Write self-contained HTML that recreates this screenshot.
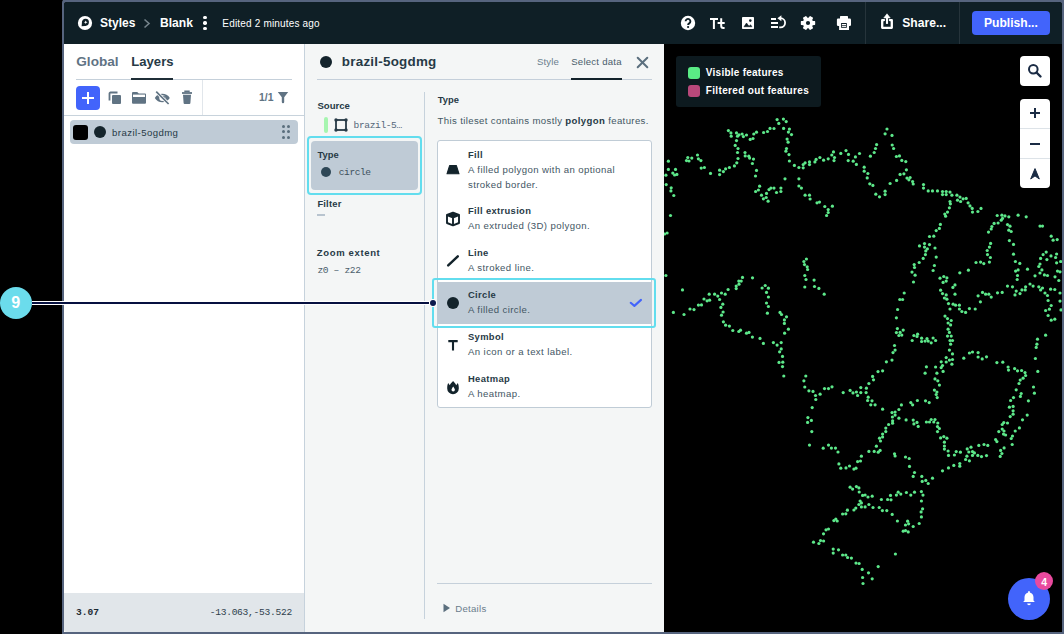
<!DOCTYPE html>
<html><head><meta charset="utf-8">
<style>
*{margin:0;padding:0;box-sizing:border-box}
html,body{width:1064px;height:634px;overflow:hidden;background:#000;position:relative}
.a{position:absolute}
.t{position:absolute;white-space:nowrap}
svg{overflow:visible}
</style></head>
<body>
<div class="a" style="left:62px;top:-1px;width:1004px;height:638px;background:#56647e;border-radius:4px"></div>
<div class="a" style="left:64px;top:2px;width:998px;height:630px;background:#000;border-radius:3px"></div>
<div class="a" style="left:64px;top:2px;width:998px;height:42px;background:#0f1f26;border-radius:3px 3px 0 0"></div>
<svg class="a" style="left:77px;top:15.1px" width="16" height="16" viewBox="0 0 16 16"><circle cx="8" cy="8" r="7.1" fill="#fff"/><path d="M8.6 3.7a3.6 3.6 0 1 1 -0.6 7.2 L4.6 11.2 4.9 7.9A3.6 3.6 0 0 1 8.6 3.7z" fill="#0f1f26"/><path d="M8.7 5.6l0.6 1.2 1.3 0.5-1.3 0.5-0.6 1.2-0.6-1.2-1.3-0.5 1.3-0.5z" fill="#fff"/></svg>
<div class="t" style="left:100.00px;top:17.00px;font:bold 12px/1 'Liberation Sans',sans-serif;color:#fff;letter-spacing:0px;">Styles</div>
<svg class="a" style="left:143px;top:18px" width="8" height="11" viewBox="0 0 8 11"><path d="M1.5 1.5 L6 5.5 L1.5 9.5" stroke="#75838b" stroke-width="1.6" fill="none"/></svg>
<div class="t" style="left:160.00px;top:17.00px;font:bold 12.1px/1 'Liberation Sans',sans-serif;color:#fff;letter-spacing:0px;">Blank</div>
<div class="a" style="left:203.3px;top:15.8px;width:3.4px;height:3.4px;background:#fff;border-radius:50%"></div>
<div class="a" style="left:203.3px;top:21.3px;width:3.4px;height:3.4px;background:#fff;border-radius:50%"></div>
<div class="a" style="left:203.3px;top:26.8px;width:3.4px;height:3.4px;background:#fff;border-radius:50%"></div>
<div class="t" style="left:222.30px;top:19.00px;font:normal 10px/1 'Liberation Sans',sans-serif;color:#fff;letter-spacing:0.18px;">Edited 2 minutes ago</div>
<svg class="a" style="left:680px;top:15px" width="16" height="16" viewBox="0 0 16 16"><circle cx="8" cy="8" r="7.2" fill="#fff"/><path d="M5.6 6.3a2.4 2.4 0 1 1 3.6 2.1c-0.8 0.5-1.1 0.8-1.1 1.6" stroke="#0f1f26" stroke-width="1.9" fill="none"/><circle cx="8.1" cy="12" r="1.1" fill="#0f1f26"/></svg>
<svg class="a" style="left:709px;top:16px" width="17" height="14" viewBox="0 0 17 14"><path d="M1 2.9h8M4.9 2V12.9" stroke="#fff" stroke-width="2"/><path d="M8.6 7.1h7.1M12.2 2.2v7.6c0 1.7 0.9 2.2 2.1 2.2h1.3" stroke="#fff" stroke-width="2" fill="none"/></svg>
<svg class="a" style="left:741px;top:16px" width="14" height="14" viewBox="0 0 14 14"><rect x="1" y="1" width="12" height="12" rx="0.8" fill="#fff"/><path d="M3 10.7 L5.5 7 L7.4 9.6 L8.3 9.9 L9.6 8.8 L10.9 10.7z" fill="#0f1f26" stroke="#0f1f26" stroke-width="0.6" stroke-linejoin="round"/><circle cx="9.3" cy="4.6" r="1.3" fill="#0f1f26"/></svg>
<svg class="a" style="left:770px;top:15px" width="17" height="15" viewBox="0 0 17 15"><path d="M1 4h5M1 8h7M1 12h7" stroke="#fff" stroke-width="1.8"/><path d="M10.5 3.2a4.6 4.6 0 0 1 0 9.2H9.2" stroke="#fff" stroke-width="1.8" fill="none"/><path d="M7.4 3.3 L11.4 0.3 L11.4 6.3z" fill="#fff"/></svg>
<svg class="a" style="left:800px;top:14.8px" width="16" height="16" viewBox="0 0 16 16"><path d="M12.32 6.43 L14.58 6.72 L14.58 9.28 L12.32 9.57 L11.52 10.96 L12.40 13.06 L10.18 14.33 L8.80 12.53 L7.20 12.53 L5.82 14.33 L3.60 13.06 L4.48 10.96 L3.68 9.57 L1.42 9.28 L1.42 6.72 L3.68 6.43 L4.48 5.04 L3.60 2.94 L5.82 1.67 L7.20 3.47 L8.80 3.47 L10.18 1.67 L12.40 2.94 L11.52 5.04z" fill="#fff" stroke="#fff" stroke-width="1.2" stroke-linejoin="round"/><circle cx="8" cy="8" r="4.9" fill="#fff"/><circle cx="8" cy="8" r="2.1" fill="#0f1f26"/></svg>
<svg class="a" style="left:836px;top:15px" width="16" height="16" viewBox="0 0 16 16"><rect x="4" y="1" width="8" height="4" rx="0.6" fill="#fff"/><rect x="0.9" y="3.6" width="14.1" height="7.4" rx="1.2" fill="#fff"/><rect x="3.1" y="9" width="9.9" height="6" fill="#fff"/><rect x="5.1" y="8" width="5.7" height="4.8" fill="#0f1f26"/><rect x="5.9" y="9" width="4.1" height="1.1" fill="#fff"/><rect x="5.9" y="10.8" width="4.1" height="1.1" fill="#fff"/></svg>
<div class="a" style="left:865px;top:2px;width:1px;height:42px;background:#26343b;"></div>
<svg class="a" style="left:880px;top:13px" width="14" height="17" viewBox="0 0 14 17"><path d="M4 7.1H2.2V14.8H11.8V7.1H9.9" stroke="#fff" stroke-width="2.3" fill="none" stroke-linejoin="round" stroke-linecap="round"/><path d="M7 10.9V4" stroke="#fff" stroke-width="2.1"/><path d="M3.8 4.9 L7 0.8 L10.2 4.9z" fill="#fff" stroke="#fff" stroke-width="0.6" stroke-linejoin="round"/></svg>
<div class="t" style="left:902.30px;top:17.00px;font:bold 12.1px/1 'Liberation Sans',sans-serif;color:#fff;letter-spacing:0px;">Share...</div>
<div class="a" style="left:959px;top:2px;width:1px;height:42px;background:#26343b;"></div>
<div class="a" style="left:972px;top:11px;width:78px;height:24px;background:#4264fb;border-radius:4px"></div>
<div class="t" style="left:984.00px;top:17.00px;font:bold 12.1px/1 'Liberation Sans',sans-serif;color:#fff;letter-spacing:0px;">Publish...</div>
<div class="a" style="left:64px;top:44px;width:240px;height:588px;background:#fff;"></div>
<div class="t" style="left:76.30px;top:55.00px;font:bold 13.6px/1 'Liberation Sans',sans-serif;color:#5f7384;letter-spacing:0px;">Global</div>
<div class="t" style="left:131.30px;top:55.00px;font:bold 13.1px/1 'Liberation Sans',sans-serif;color:#273a46;letter-spacing:0px;">Layers</div>
<div class="a" style="left:76px;top:79px;width:216px;height:1px;background:#c5d0da;"></div>
<div class="a" style="left:131px;top:78px;width:42px;height:2px;background:#1f2e37;"></div>
<div class="a" style="left:76px;top:86px;width:24px;height:24px;background:#4264fb;border-radius:4px"></div>
<div class="a" style="left:82px;top:97px;width:12px;height:2px;background:#fff;"></div>
<div class="a" style="left:87px;top:92px;width:2px;height:12px;background:#fff;"></div>
<svg class="a" style="left:108px;top:91px" width="14" height="14" viewBox="0 0 14 14"><path d="M1.5 9.5V2.5a1 1 0 0 1 1-1H9.5" stroke="#607383" stroke-width="1.8" fill="none"/><rect x="4" y="4" width="9" height="9" rx="1" fill="#607383"/></svg>
<svg class="a" style="left:131px;top:91px" width="16" height="14" viewBox="0 0 16 14"><path d="M1 2a1 1 0 0 1 1-1h4.2l1.6 1.6H14a1 1 0 0 1 1 1V11.7a1 1 0 0 1-1 1H2a1 1 0 0 1-1-1z" fill="#607383"/><rect x="2" y="3.6" width="12" height="2.4" fill="#fff"/></svg>
<svg class="a" style="left:154px;top:90px" width="18" height="16" viewBox="0 0 18 16"><path d="M0.8 8 C3.8 2.4 12.6 2.4 15.8 8 C12.6 13.6 3.8 13.6 0.8 8z" fill="#607383"/><circle cx="8.3" cy="8" r="3" fill="#fff"/><circle cx="9.2" cy="7.6" r="2" fill="#607383"/><path d="M2.2 1.6 L14.6 14" stroke="#fff" stroke-width="3.2"/><path d="M2.2 1.6 L14.6 14" stroke="#607383" stroke-width="1.7"/></svg>
<svg class="a" style="left:181px;top:90px" width="12" height="15" viewBox="0 0 12 15"><path d="M1 3h10" stroke="#607383" stroke-width="1.8"/><path d="M4 2.2V1.2h4v1" stroke="#607383" stroke-width="1.4" fill="none"/><path d="M2 4.8h8l-0.6 8.2a1 1 0 0 1-1 0.9H3.6a1 1 0 0 1-1-0.9z" fill="#607383"/></svg>
<div class="a" style="left:202px;top:80px;width:1px;height:35px;background:#e1e6eb;"></div>
<div class="t" style="left:259.00px;top:93.00px;font:bold 10.4px/1 'Liberation Sans',sans-serif;color:#607383;letter-spacing:0px;">1/1</div>
<svg class="a" style="left:277px;top:91.3px" width="12" height="12" viewBox="0 0 12 12"><path d="M0.8 1h10.4L7.2 6.2v4.8a1 1 0 0 1-2.4 0V6.2z" fill="#607383"/></svg>
<div class="a" style="left:64px;top:115px;width:240px;height:1px;background:#c8d3dc;"></div>
<div class="a" style="left:70px;top:120px;width:228px;height:24px;background:#bfcbd6;border-radius:4px"></div>
<div class="a" style="left:73px;top:125px;width:15px;height:15px;background:#000;border-radius:3px"></div>
<div class="a" style="left:94px;top:126px;width:12px;height:12px;background:#15252c;border-radius:50%"></div>
<div class="t" style="left:112.00px;top:128.00px;font:normal 9.6px/1 'Liberation Sans',sans-serif;color:#273a46;letter-spacing:0.43px;">brazil-5ogdmg</div>
<div class="a" style="left:282.0px;top:124.9px;width:3px;height:3px;background:#5a6e7d;border-radius:50%"></div>
<div class="a" style="left:282.0px;top:130.4px;width:3px;height:3px;background:#5a6e7d;border-radius:50%"></div>
<div class="a" style="left:282.0px;top:135.9px;width:3px;height:3px;background:#5a6e7d;border-radius:50%"></div>
<div class="a" style="left:287.0px;top:124.9px;width:3px;height:3px;background:#5a6e7d;border-radius:50%"></div>
<div class="a" style="left:287.0px;top:130.4px;width:3px;height:3px;background:#5a6e7d;border-radius:50%"></div>
<div class="a" style="left:287.0px;top:135.9px;width:3px;height:3px;background:#5a6e7d;border-radius:50%"></div>
<div class="a" style="left:64px;top:593px;width:240px;height:39px;background:#e1e6ea;border-radius:0 0 0 3px"></div>
<div class="t" style="left:76.00px;top:608.00px;font:bold 9.6px/1 'Liberation Mono',monospace;color:#1b2a33;letter-spacing:0px;">3.07</div>
<div class="t" style="left:209.70px;top:608.00px;font:normal 9.6px/1 'Liberation Mono',monospace;color:#2f414d;letter-spacing:-0.27px;">-13.063,-53.522</div>
<div class="a" style="left:304px;top:44px;width:360px;height:588px;background:#f4f6f6;"></div>
<div class="a" style="left:304px;top:44px;width:1px;height:588px;background:#c6d2dc;"></div>
<div class="a" style="left:320px;top:55.5px;width:12px;height:12px;background:#13232b;border-radius:50%"></div>
<div class="t" style="left:341.80px;top:55.00px;font:bold 13.4px/1 'Liberation Sans',sans-serif;color:#273a46;letter-spacing:0.25px;">brazil-5ogdmg</div>
<div class="t" style="left:537.00px;top:57.00px;font:normal 9.6px/1 'Liberation Sans',sans-serif;color:#6b7f8e;letter-spacing:0.15px;">Style</div>
<div class="t" style="left:571.20px;top:57.00px;font:normal 9.6px/1 'Liberation Sans',sans-serif;color:#4a5d6b;letter-spacing:0.23px;">Select data</div>
<div class="a" style="left:317px;top:79px;width:335px;height:1px;background:#c4cfda;"></div>
<div class="a" style="left:571px;top:78px;width:51px;height:2px;background:#13232b;"></div>
<svg class="a" style="left:636.4px;top:56px" width="13" height="13" viewBox="0 0 13 13"><path d="M1.7 1.7 L11.3 11.3 M11.3 1.7 L1.7 11.3" stroke="#5b6f7e" stroke-width="2" stroke-linecap="round"/></svg>
<div class="t" style="left:317.40px;top:101.00px;font:bold 9.6px/1 'Liberation Sans',sans-serif;color:#273a46;letter-spacing:0px;">Source</div>
<div class="a" style="left:324px;top:117px;width:3.5px;height:15.5px;background:#a6f5b0;border-radius:2px"></div>
<svg class="a" style="left:333px;top:117px" width="16" height="16" viewBox="0 0 16 16"><rect x="3" y="3" width="10" height="10" stroke="#273a46" stroke-width="1.8" fill="none"/><circle cx="3" cy="3" r="1.7" fill="#273a46"/><circle cx="13" cy="3" r="1.7" fill="#273a46"/><circle cx="3" cy="13" r="1.7" fill="#273a46"/><circle cx="13" cy="13" r="1.7" fill="#273a46"/></svg>
<div class="t" style="left:353.60px;top:121.00px;font:normal 9.6px/1 'Liberation Mono',monospace;color:#55687a;letter-spacing:-0.4px;">brazil-5…</div>
<div class="a" style="left:307px;top:136px;width:115px;height:59px;background:transparent;border:2px solid #62ddee;border-radius:4px"></div>
<div class="a" style="left:311px;top:141px;width:107px;height:49px;background:#bfcbd6;border-radius:4px"></div>
<div class="t" style="left:317.60px;top:150.00px;font:bold 9.4px/1 'Liberation Sans',sans-serif;color:#273a46;letter-spacing:0px;">Type</div>
<div class="a" style="left:321px;top:167px;width:10px;height:10px;background:#2e4756;border-radius:50%"></div>
<div class="t" style="left:338.80px;top:168.00px;font:normal 9.6px/1 'Liberation Mono',monospace;color:#3d505d;letter-spacing:-0.45px;">circle</div>
<div class="t" style="left:317.40px;top:199.00px;font:bold 9.4px/1 'Liberation Sans',sans-serif;color:#273a46;letter-spacing:0.2px;">Filter</div>
<div class="a" style="left:317px;top:214px;width:7.5px;height:2px;background:#b8c4cf;"></div>
<div class="t" style="left:316.80px;top:248.00px;font:bold 9.5px/1 'Liberation Sans',sans-serif;color:#273a46;letter-spacing:0.65px;">Zoom extent</div>
<div class="t" style="left:317.40px;top:266.00px;font:normal 9.6px/1 'Liberation Mono',monospace;color:#4c5f6d;letter-spacing:-0.35px;">z0 – z22</div>
<div class="a" style="left:424px;top:92px;width:1px;height:527px;background:#c6d2dc;"></div>
<div class="t" style="left:437.80px;top:95.00px;font:bold 9.4px/1 'Liberation Sans',sans-serif;color:#273a46;letter-spacing:0px;">Type</div>
<div class="t" style="left:437.60px;top:116.00px;font:normal 9.6px/1 'Liberation Sans',sans-serif;color:#435664;letter-spacing:0.36px;">This tileset contains mostly <b style="color:#273a46">polygon</b> features.</div>
<div class="a" style="left:437px;top:140px;width:215px;height:268px;background:#fff;border:1px solid #c0ccd6;border-radius:3px"></div>
<div class="t" style="left:468.00px;top:150.00px;font:bold 9.4px/1 'Liberation Sans',sans-serif;color:#273a46;letter-spacing:0.35px;">Fill</div>
<div class="t" style="left:468.00px;top:165.00px;font:normal 9.6px/1 'Liberation Sans',sans-serif;color:#435664;letter-spacing:0.4px;">A filled polygon with an optional</div>
<div class="t" style="left:468.00px;top:180.00px;font:normal 9.6px/1 'Liberation Sans',sans-serif;color:#435664;letter-spacing:0.4px;">stroked border.</div>
<div class="t" style="left:468.00px;top:206.00px;font:bold 9.4px/1 'Liberation Sans',sans-serif;color:#273a46;letter-spacing:0.35px;">Fill extrusion</div>
<div class="t" style="left:468.00px;top:221.00px;font:normal 9.6px/1 'Liberation Sans',sans-serif;color:#435664;letter-spacing:0.4px;">An extruded (3D) polygon.</div>
<div class="t" style="left:468.00px;top:248.00px;font:bold 9.4px/1 'Liberation Sans',sans-serif;color:#273a46;letter-spacing:0.35px;">Line</div>
<div class="t" style="left:468.00px;top:263.00px;font:normal 9.6px/1 'Liberation Sans',sans-serif;color:#435664;letter-spacing:0.4px;">A stroked line.</div>
<div class="a" style="left:438px;top:282px;width:213px;height:42px;background:#bfcbd6;"></div>
<div class="t" style="left:468.00px;top:290.00px;font:bold 9.4px/1 'Liberation Sans',sans-serif;color:#273a46;letter-spacing:0.35px;">Circle</div>
<div class="t" style="left:468.00px;top:305.00px;font:normal 9.6px/1 'Liberation Sans',sans-serif;color:#435664;letter-spacing:0.4px;">A filled circle.</div>
<div class="t" style="left:468.00px;top:332.00px;font:bold 9.4px/1 'Liberation Sans',sans-serif;color:#273a46;letter-spacing:0.35px;">Symbol</div>
<div class="t" style="left:468.00px;top:347.00px;font:normal 9.6px/1 'Liberation Sans',sans-serif;color:#435664;letter-spacing:0.4px;">An icon or a text label.</div>
<div class="t" style="left:468.00px;top:374.00px;font:bold 9.4px/1 'Liberation Sans',sans-serif;color:#273a46;letter-spacing:0.35px;">Heatmap</div>
<div class="t" style="left:468.00px;top:389.00px;font:normal 9.6px/1 'Liberation Sans',sans-serif;color:#435664;letter-spacing:0.4px;">A heatmap.</div>
<svg class="a" style="left:445px;top:163px" width="16" height="12" viewBox="0 0 16 12"><path d="M4.6 2.6h6.8l2.6 8.2H2z" fill="#13232b" stroke="#13232b" stroke-width="1.1" stroke-linejoin="round"/></svg>
<svg class="a" style="left:445px;top:211px" width="16" height="16" viewBox="0 0 16 16"><path d="M8 1.6 L14 4 V12 L8 14.4 L2 12 V4z" stroke="#13232b" stroke-width="1.9" fill="none" stroke-linejoin="round"/><path d="M2 4 L8 1.6 L14 4 L8 6.4z" fill="#13232b"/><path d="M2 4 L8 6.4 L14 4 M8 6.4V14.4" stroke="#13232b" stroke-width="1.9" fill="none"/></svg>
<svg class="a" style="left:445px;top:252px" width="16" height="16" viewBox="0 0 16 16"><path d="M3.2 13.3 L12.8 4.4" stroke="#13232b" stroke-width="2.5" stroke-linecap="round"/></svg>
<div class="a" style="left:446.6px;top:297px;width:12.4px;height:12.4px;background:#13232b;border-radius:50%"></div>
<svg class="a" style="left:445px;top:337px" width="16" height="16" viewBox="0 0 16 16"><path d="M3.3 4.1h9.4M8 4v9.5" stroke="#13232b" stroke-width="2.1"/></svg>
<svg class="a" style="left:445px;top:378px" width="16" height="18" viewBox="0 0 16 18"><path d="M8.1 2.9C9.6 4.5 10.8 5.8 11.2 7.2L12.8 5.1C13.6 6.6 13.8 8.2 13.8 10.4A5.8 5.8 0 0 1 2.2 10.4C2.2 8.2 2.4 6.6 3.2 5.1L4.8 7.2C5.2 5.8 6.5 4.5 8.1 2.9z" fill="#13232b"/><path d="M8.2 8.4C9.2 9.8 9.9 10.9 9.9 11.8a1.7 1.7 0 0 1-3.4 0c0-0.9 0.7-2 1.7-3.4z" fill="#fff"/></svg>
<svg class="a" style="left:628px;top:296px" width="16" height="13" viewBox="0 0 16 13"><path d="M2.7 6.8 L6.4 9.9 L13 3.9" stroke="#4264fb" stroke-width="2.1" fill="none" stroke-linecap="round" stroke-linejoin="round"/></svg>
<div class="a" style="left:432px;top:277.5px;width:224px;height:50px;background:transparent;border:2px solid #62ddee;border-radius:3px"></div>
<div class="a" style="left:437px;top:583px;width:215px;height:1px;background:#c5d0da;"></div>
<svg class="a" style="left:442px;top:603px" width="9" height="10" viewBox="0 0 9 10"><path d="M1.5 0.8 L8 5 L1.5 9.2z" fill="#5b6f7e"/></svg>
<div class="t" style="left:455.20px;top:604.00px;font:normal 9.6px/1 'Liberation Sans',sans-serif;color:#6a7d8c;letter-spacing:0.28px;">Details</div>
<div class="a" style="left:664px;top:44px;width:398px;height:588px;background:#000;"></div>
<svg class="a" style="left:664px;top:44px;overflow:hidden" width="398" height="588"><g fill="#5de88a"><circle cx="113.1" cy="75.6" r="1.6"/><circle cx="119.4" cy="75.1" r="1.6"/><circle cx="122.2" cy="77.6" r="1.6"/><circle cx="114.8" cy="79.4" r="1.6"/><circle cx="119.6" cy="84.4" r="1.6"/><circle cx="125.4" cy="85.1" r="1.6"/><circle cx="124.4" cy="88.1" r="1.6"/><circle cx="127.5" cy="90.6" r="1.6"/><circle cx="123.1" cy="95.1" r="1.6"/><circle cx="124.1" cy="98.2" r="1.6"/><circle cx="122.5" cy="104.5" r="1.6"/><circle cx="121.9" cy="107.2" r="1.6"/><circle cx="125.0" cy="110.6" r="1.6"/><circle cx="125.4" cy="117.0" r="1.6"/><circle cx="130.4" cy="121.4" r="1.6"/><circle cx="121.0" cy="134.8" r="1.6"/><circle cx="95.6" cy="142.2" r="1.6"/><circle cx="106.9" cy="144.1" r="1.6"/><circle cx="110.0" cy="144.1" r="1.6"/><circle cx="116.9" cy="144.1" r="1.6"/><circle cx="110.0" cy="84.5" r="1.6"/><circle cx="106.0" cy="84.4" r="1.6"/><circle cx="103.5" cy="87.5" r="1.6"/><circle cx="99.6" cy="88.5" r="1.6"/><circle cx="92.5" cy="88.2" r="1.6"/><circle cx="89.8" cy="90.0" r="1.6"/><circle cx="89.0" cy="94.5" r="1.6"/><circle cx="86.2" cy="95.4" r="1.6"/><circle cx="82.5" cy="91.0" r="1.6"/><circle cx="79.4" cy="92.6" r="1.6"/><circle cx="78.1" cy="90.0" r="1.6"/><circle cx="75.0" cy="90.8" r="1.6"/><circle cx="72.5" cy="88.9" r="1.6"/><circle cx="73.5" cy="92.2" r="1.6"/><circle cx="67.2" cy="92.2" r="1.6"/><circle cx="66.9" cy="88.9" r="1.6"/><circle cx="64.4" cy="86.6" r="1.6"/><circle cx="72.5" cy="96.6" r="1.6"/><circle cx="71.2" cy="101.4" r="1.6"/><circle cx="74.0" cy="104.5" r="1.6"/><circle cx="73.5" cy="108.5" r="1.6"/><circle cx="74.0" cy="114.5" r="1.6"/><circle cx="72.8" cy="118.8" r="1.6"/><circle cx="70.4" cy="121.9" r="1.6"/><circle cx="65.4" cy="123.5" r="1.6"/><circle cx="61.6" cy="124.8" r="1.6"/><circle cx="59.4" cy="127.6" r="1.6"/><circle cx="55.6" cy="126.2" r="1.6"/><circle cx="55.6" cy="130.6" r="1.6"/><circle cx="81.0" cy="108.5" r="1.6"/><circle cx="81.2" cy="111.9" r="1.6"/><circle cx="84.8" cy="112.2" r="1.6"/><circle cx="85.6" cy="114.1" r="1.6"/><circle cx="89.5" cy="115.1" r="1.6"/><circle cx="88.4" cy="119.5" r="1.6"/><circle cx="92.5" cy="126.4" r="1.6"/><circle cx="91.5" cy="132.0" r="1.6"/><circle cx="23.8" cy="113.5" r="1.6"/><circle cx="27.8" cy="114.1" r="1.6"/><circle cx="33.5" cy="111.0" r="1.6"/><circle cx="34.4" cy="114.8" r="1.6"/><circle cx="36.9" cy="116.6" r="1.6"/><circle cx="25.0" cy="117.0" r="1.6"/><circle cx="22.5" cy="116.6" r="1.6"/><circle cx="37.2" cy="124.1" r="1.6"/><circle cx="40.4" cy="123.5" r="1.6"/><circle cx="46.5" cy="129.4" r="1.6"/><circle cx="4.4" cy="117.2" r="1.6"/><circle cx="4.4" cy="125.4" r="1.6"/><circle cx="11.5" cy="125.4" r="1.6"/><circle cx="1.9" cy="131.2" r="1.6"/><circle cx="8.8" cy="129.1" r="1.6"/><circle cx="10.6" cy="131.0" r="1.6"/><circle cx="12.9" cy="130.4" r="1.6"/><circle cx="2.2" cy="140.6" r="1.6"/><circle cx="7.2" cy="143.8" r="1.6"/><circle cx="117.2" cy="304.9" r="1.6"/><circle cx="115.6" cy="307.8" r="1.6"/><circle cx="118.5" cy="312.4" r="1.6"/><circle cx="115.0" cy="318.4" r="1.6"/><circle cx="118.8" cy="318.2" r="1.6"/><circle cx="118.5" cy="322.6" r="1.6"/><circle cx="119.8" cy="332.0" r="1.6"/><circle cx="231.1" cy="306.1" r="1.6"/><circle cx="229.0" cy="308.6" r="1.6"/><circle cx="228.0" cy="316.1" r="1.6"/><circle cx="222.4" cy="317.8" r="1.6"/><circle cx="218.6" cy="326.8" r="1.6"/><circle cx="214.0" cy="327.6" r="1.6"/><circle cx="208.6" cy="332.4" r="1.6"/><circle cx="209.5" cy="335.8" r="1.6"/><circle cx="204.9" cy="339.5" r="1.6"/><circle cx="202.4" cy="344.2" r="1.6"/><circle cx="202.1" cy="348.6" r="1.6"/><circle cx="196.8" cy="343.6" r="1.6"/><circle cx="196.8" cy="348.6" r="1.6"/><circle cx="193.6" cy="351.5" r="1.6"/><circle cx="192.4" cy="348.0" r="1.6"/><circle cx="189.0" cy="348.9" r="1.6"/><circle cx="186.1" cy="346.4" r="1.6"/><circle cx="179.2" cy="348.6" r="1.6"/><circle cx="168.0" cy="342.8" r="1.6"/><circle cx="164.5" cy="344.6" r="1.6"/><circle cx="160.5" cy="344.6" r="1.6"/><circle cx="156.1" cy="350.2" r="1.6"/><circle cx="151.5" cy="351.5" r="1.6"/><circle cx="151.8" cy="355.5" r="1.6"/><circle cx="149.0" cy="347.4" r="1.6"/><circle cx="144.9" cy="346.8" r="1.6"/><circle cx="140.8" cy="343.0" r="1.6"/><circle cx="139.9" cy="336.8" r="1.6"/><circle cx="141.8" cy="332.0" r="1.6"/><circle cx="148.2" cy="363.6" r="1.6"/><circle cx="143.9" cy="373.6" r="1.6"/><circle cx="147.4" cy="376.4" r="1.6"/><circle cx="143.6" cy="378.4" r="1.6"/><circle cx="204.2" cy="353.2" r="1.6"/><circle cx="203.6" cy="356.5" r="1.6"/><circle cx="208.0" cy="356.8" r="1.6"/><circle cx="206.8" cy="360.8" r="1.6"/><circle cx="211.1" cy="360.8" r="1.6"/><circle cx="218.6" cy="365.2" r="1.6"/><circle cx="237.4" cy="360.9" r="1.6"/><circle cx="234.9" cy="365.5" r="1.6"/><circle cx="231.1" cy="368.0" r="1.6"/><circle cx="228.0" cy="368.6" r="1.6"/><circle cx="231.1" cy="371.1" r="1.6"/><circle cx="228.4" cy="373.0" r="1.6"/><circle cx="234.9" cy="374.2" r="1.6"/><circle cx="228.6" cy="376.8" r="1.6"/><circle cx="228.6" cy="379.2" r="1.6"/><circle cx="224.6" cy="380.5" r="1.6"/><circle cx="242.1" cy="375.9" r="1.6"/><circle cx="249.2" cy="376.1" r="1.6"/><circle cx="253.0" cy="378.4" r="1.6"/><circle cx="249.9" cy="379.9" r="1.6"/><circle cx="262.4" cy="378.0" r="1.6"/><circle cx="265.5" cy="378.0" r="1.6"/><circle cx="246.8" cy="358.6" r="1.6"/><circle cx="248.6" cy="360.8" r="1.6"/><circle cx="253.4" cy="356.5" r="1.6"/><circle cx="261.5" cy="356.8" r="1.6"/><circle cx="265.2" cy="358.6" r="1.6"/><circle cx="262.4" cy="322.8" r="1.6"/><circle cx="261.1" cy="329.2" r="1.6"/><circle cx="285.4" cy="306.1" r="1.6"/><circle cx="288.5" cy="309.9" r="1.6"/><circle cx="282.2" cy="313.6" r="1.6"/><circle cx="285.4" cy="316.1" r="1.6"/><circle cx="288.5" cy="315.5" r="1.6"/><circle cx="287.9" cy="320.2" r="1.6"/><circle cx="282.2" cy="318.0" r="1.6"/><circle cx="277.2" cy="317.8" r="1.6"/><circle cx="278.5" cy="321.5" r="1.6"/><circle cx="271.6" cy="323.0" r="1.6"/><circle cx="277.2" cy="323.6" r="1.6"/><circle cx="279.1" cy="327.4" r="1.6"/><circle cx="272.9" cy="329.2" r="1.6"/><circle cx="271.0" cy="334.9" r="1.6"/><circle cx="273.8" cy="336.8" r="1.6"/><circle cx="275.4" cy="341.1" r="1.6"/><circle cx="270.4" cy="346.1" r="1.6"/><circle cx="272.9" cy="348.0" r="1.6"/><circle cx="272.2" cy="350.5" r="1.6"/><circle cx="273.2" cy="353.6" r="1.6"/><circle cx="299.8" cy="314.2" r="1.6"/><circle cx="305.4" cy="309.0" r="1.6"/><circle cx="308.5" cy="308.0" r="1.6"/><circle cx="314.1" cy="308.6" r="1.6"/><circle cx="314.1" cy="313.0" r="1.6"/><circle cx="318.2" cy="314.9" r="1.6"/><circle cx="322.5" cy="312.8" r="1.6"/><circle cx="332.9" cy="318.6" r="1.6"/><circle cx="338.8" cy="318.2" r="1.6"/><circle cx="344.1" cy="323.0" r="1.6"/><circle cx="344.5" cy="326.1" r="1.6"/><circle cx="350.6" cy="324.6" r="1.6"/><circle cx="353.5" cy="326.8" r="1.6"/><circle cx="357.6" cy="326.5" r="1.6"/><circle cx="361.0" cy="328.6" r="1.6"/><circle cx="361.6" cy="331.5" r="1.6"/><circle cx="359.1" cy="334.2" r="1.6"/><circle cx="356.2" cy="336.1" r="1.6"/><circle cx="355.0" cy="339.5" r="1.6"/><circle cx="352.2" cy="345.8" r="1.6"/><circle cx="357.2" cy="349.5" r="1.6"/><circle cx="356.4" cy="352.4" r="1.6"/><circle cx="349.5" cy="353.6" r="1.6"/><circle cx="346.6" cy="356.5" r="1.6"/><circle cx="364.4" cy="356.8" r="1.6"/><circle cx="369.5" cy="343.0" r="1.6"/><circle cx="370.4" cy="349.2" r="1.6"/><circle cx="371.4" cy="314.5" r="1.6"/><circle cx="373.8" cy="327.4" r="1.6"/><circle cx="372.2" cy="303.4" r="1.6"/><circle cx="345.4" cy="363.2" r="1.6"/><circle cx="349.1" cy="362.4" r="1.6"/><circle cx="349.1" cy="366.8" r="1.6"/><circle cx="349.1" cy="370.2" r="1.6"/><circle cx="346.2" cy="372.6" r="1.6"/><circle cx="363.2" cy="371.1" r="1.6"/><circle cx="358.5" cy="375.8" r="1.6"/><circle cx="343.5" cy="379.0" r="1.6"/><circle cx="338.2" cy="380.5" r="1.6"/><circle cx="339.8" cy="378.6" r="1.6"/><circle cx="267.2" cy="375.5" r="1.6"/><circle cx="271.0" cy="375.5" r="1.6"/><circle cx="273.8" cy="379.0" r="1.6"/><circle cx="269.8" cy="378.0" r="1.6"/><circle cx="147.8" cy="387.6" r="1.6"/><circle cx="145.5" cy="401.1" r="1.6"/><circle cx="159.2" cy="404.2" r="1.6"/><circle cx="164.5" cy="401.1" r="1.6"/><circle cx="167.4" cy="404.1" r="1.6"/><circle cx="171.5" cy="404.1" r="1.6"/><circle cx="174.0" cy="408.0" r="1.6"/><circle cx="174.9" cy="419.9" r="1.6"/><circle cx="176.8" cy="424.2" r="1.6"/><circle cx="182.0" cy="423.9" r="1.6"/><circle cx="185.5" cy="422.0" r="1.6"/><circle cx="189.9" cy="425.1" r="1.6"/><circle cx="192.0" cy="424.2" r="1.6"/><circle cx="193.6" cy="417.6" r="1.6"/><circle cx="196.5" cy="417.0" r="1.6"/><circle cx="197.4" cy="412.2" r="1.6"/><circle cx="204.9" cy="407.4" r="1.6"/><circle cx="210.2" cy="407.4" r="1.6"/><circle cx="214.2" cy="408.2" r="1.6"/><circle cx="216.1" cy="406.4" r="1.6"/><circle cx="212.4" cy="402.2" r="1.6"/><circle cx="216.5" cy="397.0" r="1.6"/><circle cx="215.5" cy="394.2" r="1.6"/><circle cx="218.6" cy="393.0" r="1.6"/><circle cx="218.6" cy="390.1" r="1.6"/><circle cx="221.8" cy="387.6" r="1.6"/><circle cx="221.8" cy="384.1" r="1.6"/><circle cx="254.2" cy="382.4" r="1.6"/><circle cx="231.1" cy="412.0" r="1.6"/><circle cx="230.5" cy="409.8" r="1.6"/><circle cx="241.5" cy="413.0" r="1.6"/><circle cx="245.2" cy="414.5" r="1.6"/><circle cx="245.5" cy="422.4" r="1.6"/><circle cx="250.5" cy="428.5" r="1.6"/><circle cx="249.2" cy="432.4" r="1.6"/><circle cx="257.8" cy="432.4" r="1.6"/><circle cx="258.2" cy="437.4" r="1.6"/><circle cx="261.8" cy="436.4" r="1.6"/><circle cx="264.2" cy="439.5" r="1.6"/><circle cx="186.1" cy="443.2" r="1.6"/><circle cx="188.6" cy="445.1" r="1.6"/><circle cx="192.4" cy="442.6" r="1.6"/><circle cx="194.9" cy="443.9" r="1.6"/><circle cx="195.2" cy="448.0" r="1.6"/><circle cx="198.6" cy="451.4" r="1.6"/><circle cx="201.1" cy="451.0" r="1.6"/><circle cx="204.0" cy="453.0" r="1.6"/><circle cx="208.2" cy="452.2" r="1.6"/><circle cx="196.1" cy="457.0" r="1.6"/><circle cx="197.4" cy="458.9" r="1.6"/><circle cx="194.9" cy="460.5" r="1.6"/><circle cx="204.9" cy="460.5" r="1.6"/><circle cx="217.4" cy="455.5" r="1.6"/><circle cx="223.6" cy="455.5" r="1.6"/><circle cx="226.5" cy="451.4" r="1.6"/><circle cx="227.0" cy="455.8" r="1.6"/><circle cx="232.4" cy="451.1" r="1.6"/><circle cx="234.2" cy="448.2" r="1.6"/><circle cx="236.8" cy="450.1" r="1.6"/><circle cx="242.4" cy="448.5" r="1.6"/><circle cx="246.8" cy="451.1" r="1.6"/><circle cx="250.5" cy="448.2" r="1.6"/><circle cx="257.4" cy="447.6" r="1.6"/><circle cx="259.0" cy="451.1" r="1.6"/><circle cx="257.4" cy="457.0" r="1.6"/><circle cx="273.5" cy="382.6" r="1.6"/><circle cx="275.4" cy="384.5" r="1.6"/><circle cx="273.5" cy="387.6" r="1.6"/><circle cx="276.6" cy="393.9" r="1.6"/><circle cx="279.8" cy="392.6" r="1.6"/><circle cx="282.9" cy="394.2" r="1.6"/><circle cx="280.4" cy="398.2" r="1.6"/><circle cx="280.4" cy="402.0" r="1.6"/><circle cx="280.4" cy="405.1" r="1.6"/><circle cx="284.1" cy="407.0" r="1.6"/><circle cx="284.5" cy="411.4" r="1.6"/><circle cx="290.4" cy="411.0" r="1.6"/><circle cx="292.2" cy="407.6" r="1.6"/><circle cx="296.4" cy="408.2" r="1.6"/><circle cx="303.2" cy="404.9" r="1.6"/><circle cx="307.0" cy="403.2" r="1.6"/><circle cx="304.8" cy="408.0" r="1.6"/><circle cx="308.5" cy="407.6" r="1.6"/><circle cx="310.4" cy="408.9" r="1.6"/><circle cx="308.5" cy="411.4" r="1.6"/><circle cx="302.9" cy="412.2" r="1.6"/><circle cx="301.6" cy="415.5" r="1.6"/><circle cx="305.4" cy="416.8" r="1.6"/><circle cx="313.8" cy="411.4" r="1.6"/><circle cx="317.5" cy="412.6" r="1.6"/><circle cx="322.5" cy="411.6" r="1.6"/><circle cx="314.8" cy="401.4" r="1.6"/><circle cx="320.0" cy="400.5" r="1.6"/><circle cx="323.8" cy="401.4" r="1.6"/><circle cx="331.6" cy="395.5" r="1.6"/><circle cx="332.9" cy="397.6" r="1.6"/><circle cx="334.8" cy="387.6" r="1.6"/><circle cx="338.2" cy="385.1" r="1.6"/><circle cx="340.0" cy="387.0" r="1.6"/><circle cx="339.5" cy="390.1" r="1.6"/><circle cx="341.6" cy="391.0" r="1.6"/><circle cx="355.4" cy="383.9" r="1.6"/><circle cx="351.2" cy="387.0" r="1.6"/><circle cx="348.5" cy="392.0" r="1.6"/><circle cx="347.2" cy="394.5" r="1.6"/><circle cx="348.2" cy="400.5" r="1.6"/><circle cx="340.1" cy="403.9" r="1.6"/><circle cx="336.6" cy="406.4" r="1.6"/><circle cx="337.9" cy="409.5" r="1.6"/><circle cx="336.2" cy="412.4" r="1.6"/><circle cx="295.8" cy="419.5" r="1.6"/><circle cx="295.8" cy="422.2" r="1.6"/><circle cx="289.8" cy="421.4" r="1.6"/><circle cx="284.5" cy="423.9" r="1.6"/><circle cx="278.5" cy="426.8" r="1.6"/><circle cx="268.5" cy="434.2" r="1.6"/><circle cx="197.4" cy="462.9" r="1.6"/><circle cx="201.1" cy="462.9" r="1.6"/><circle cx="209.0" cy="463.5" r="1.6"/><circle cx="215.2" cy="463.5" r="1.6"/><circle cx="218.4" cy="466.6" r="1.6"/><circle cx="222.8" cy="466.6" r="1.6"/><circle cx="228.2" cy="470.4" r="1.6"/><circle cx="233.4" cy="477.0" r="1.6"/><circle cx="243.6" cy="477.2" r="1.6"/><circle cx="244.6" cy="479.8" r="1.6"/><circle cx="241.5" cy="481.0" r="1.6"/><circle cx="249.2" cy="482.5" r="1.6"/><circle cx="255.2" cy="479.5" r="1.6"/><circle cx="257.4" cy="472.9" r="1.6"/><circle cx="257.1" cy="467.9" r="1.6"/><circle cx="258.6" cy="464.8" r="1.6"/><circle cx="241.5" cy="486.6" r="1.6"/><circle cx="244.2" cy="487.9" r="1.6"/><circle cx="239.2" cy="487.2" r="1.6"/><circle cx="191.8" cy="464.1" r="1.6"/><circle cx="189.9" cy="466.0" r="1.6"/><circle cx="183.4" cy="466.2" r="1.6"/><circle cx="181.8" cy="469.8" r="1.6"/><circle cx="178.6" cy="470.0" r="1.6"/><circle cx="171.8" cy="475.0" r="1.6"/><circle cx="173.2" cy="477.0" r="1.6"/><circle cx="169.9" cy="476.6" r="1.6"/><circle cx="164.5" cy="485.0" r="1.6"/><circle cx="162.0" cy="485.8" r="1.6"/><circle cx="159.5" cy="489.8" r="1.6"/><circle cx="159.6" cy="497.0" r="1.6"/><circle cx="156.5" cy="496.6" r="1.6"/><circle cx="154.9" cy="499.5" r="1.6"/><circle cx="149.5" cy="498.2" r="1.6"/><circle cx="169.2" cy="505.1" r="1.6"/><circle cx="174.5" cy="505.8" r="1.6"/><circle cx="169.2" cy="509.1" r="1.6"/><circle cx="178.6" cy="511.0" r="1.6"/><circle cx="181.8" cy="511.0" r="1.6"/><circle cx="183.6" cy="513.5" r="1.6"/><circle cx="187.4" cy="514.1" r="1.6"/><circle cx="192.0" cy="519.1" r="1.6"/><circle cx="195.1" cy="519.5" r="1.6"/><circle cx="198.2" cy="525.4" r="1.6"/><circle cx="204.5" cy="528.8" r="1.6"/><circle cx="198.6" cy="533.5" r="1.6"/><circle cx="208.2" cy="534.8" r="1.6"/><circle cx="199.0" cy="539.5" r="1.6"/><circle cx="214.2" cy="522.6" r="1.6"/><circle cx="231.4" cy="510.0" r="1.6"/><circle cx="223.0" cy="85.0" r="1.6"/><circle cx="221.1" cy="89.8" r="1.6"/><circle cx="228.0" cy="91.4" r="1.6"/><circle cx="228.2" cy="101.0" r="1.6"/><circle cx="229.6" cy="104.5" r="1.6"/><circle cx="212.6" cy="100.6" r="1.6"/><circle cx="211.5" cy="104.5" r="1.6"/><circle cx="210.2" cy="108.5" r="1.6"/><circle cx="206.4" cy="112.2" r="1.6"/><circle cx="195.5" cy="109.5" r="1.6"/><circle cx="191.4" cy="112.9" r="1.6"/><circle cx="192.4" cy="120.4" r="1.6"/><circle cx="189.2" cy="117.2" r="1.6"/><circle cx="184.2" cy="116.6" r="1.6"/><circle cx="184.5" cy="110.4" r="1.6"/><circle cx="182.0" cy="106.6" r="1.6"/><circle cx="176.8" cy="109.4" r="1.6"/><circle cx="169.5" cy="107.9" r="1.6"/><circle cx="167.8" cy="111.0" r="1.6"/><circle cx="170.5" cy="113.5" r="1.6"/><circle cx="170.0" cy="116.6" r="1.6"/><circle cx="164.2" cy="114.8" r="1.6"/><circle cx="159.6" cy="116.2" r="1.6"/><circle cx="155.9" cy="113.5" r="1.6"/><circle cx="152.1" cy="115.4" r="1.6"/><circle cx="150.9" cy="117.9" r="1.6"/><circle cx="145.5" cy="117.9" r="1.6"/><circle cx="145.5" cy="120.6" r="1.6"/><circle cx="141.1" cy="118.8" r="1.6"/><circle cx="139.2" cy="120.6" r="1.6"/><circle cx="139.2" cy="123.8" r="1.6"/><circle cx="134.9" cy="123.5" r="1.6"/><circle cx="134.9" cy="134.8" r="1.6"/><circle cx="134.9" cy="142.0" r="1.6"/><circle cx="137.4" cy="144.1" r="1.6"/><circle cx="200.2" cy="123.2" r="1.6"/><circle cx="200.2" cy="127.2" r="1.6"/><circle cx="203.9" cy="129.5" r="1.6"/><circle cx="203.2" cy="133.9" r="1.6"/><circle cx="205.8" cy="139.8" r="1.6"/><circle cx="208.9" cy="141.4" r="1.6"/><circle cx="232.4" cy="112.5" r="1.6"/><circle cx="235.5" cy="111.9" r="1.6"/><circle cx="237.8" cy="116.4" r="1.6"/><circle cx="241.8" cy="117.6" r="1.6"/><circle cx="242.4" cy="125.8" r="1.6"/><circle cx="239.9" cy="129.8" r="1.6"/><circle cx="236.1" cy="130.4" r="1.6"/><circle cx="232.6" cy="136.4" r="1.6"/><circle cx="226.1" cy="139.5" r="1.6"/><circle cx="243.0" cy="134.1" r="1.6"/><circle cx="246.1" cy="133.5" r="1.6"/><circle cx="244.9" cy="135.8" r="1.6"/><circle cx="248.6" cy="137.5" r="1.6"/><circle cx="249.2" cy="140.0" r="1.6"/><circle cx="259.5" cy="140.6" r="1.6"/><circle cx="259.5" cy="144.1" r="1.6"/><circle cx="6.9" cy="146.9" r="1.6"/><circle cx="9.8" cy="151.5" r="1.6"/><circle cx="6.5" cy="171.5" r="1.6"/><circle cx="3.1" cy="189.0" r="1.6"/><circle cx="0.6" cy="190.0" r="1.6"/><circle cx="91.6" cy="147.5" r="1.6"/><circle cx="94.4" cy="146.0" r="1.6"/><circle cx="97.5" cy="151.2" r="1.6"/><circle cx="99.4" cy="154.8" r="1.6"/><circle cx="102.5" cy="149.4" r="1.6"/><circle cx="102.2" cy="153.5" r="1.6"/><circle cx="104.1" cy="157.2" r="1.6"/><circle cx="105.0" cy="145.6" r="1.6"/><circle cx="112.5" cy="148.5" r="1.6"/><circle cx="116.9" cy="147.5" r="1.6"/><circle cx="141.1" cy="151.2" r="1.6"/><circle cx="145.5" cy="151.2" r="1.6"/><circle cx="146.1" cy="155.0" r="1.6"/><circle cx="153.0" cy="158.8" r="1.6"/><circle cx="155.5" cy="158.1" r="1.6"/><circle cx="160.8" cy="162.5" r="1.6"/><circle cx="168.4" cy="162.2" r="1.6"/><circle cx="164.2" cy="165.6" r="1.6"/><circle cx="164.2" cy="168.5" r="1.6"/><circle cx="162.6" cy="171.5" r="1.6"/><circle cx="211.8" cy="150.2" r="1.6"/><circle cx="215.5" cy="152.8" r="1.6"/><circle cx="221.1" cy="147.2" r="1.6"/><circle cx="221.1" cy="150.6" r="1.6"/><circle cx="264.2" cy="146.9" r="1.6"/><circle cx="255.5" cy="201.9" r="1.6"/><circle cx="260.5" cy="199.6" r="1.6"/><circle cx="260.5" cy="203.1" r="1.6"/><circle cx="263.4" cy="204.8" r="1.6"/><circle cx="261.8" cy="206.9" r="1.6"/><circle cx="261.4" cy="210.6" r="1.6"/><circle cx="259.2" cy="214.4" r="1.6"/><circle cx="255.2" cy="218.5" r="1.6"/><circle cx="250.2" cy="220.6" r="1.6"/><circle cx="250.5" cy="223.5" r="1.6"/><circle cx="265.5" cy="192.5" r="1.6"/><circle cx="265.5" cy="200.6" r="1.6"/><circle cx="142.4" cy="215.0" r="1.6"/><circle cx="139.9" cy="217.5" r="1.6"/><circle cx="140.5" cy="220.6" r="1.6"/><circle cx="143.2" cy="222.8" r="1.6"/><circle cx="268.5" cy="146.9" r="1.6"/><circle cx="273.5" cy="146.9" r="1.6"/><circle cx="278.5" cy="147.5" r="1.6"/><circle cx="282.2" cy="147.5" r="1.6"/><circle cx="286.0" cy="148.1" r="1.6"/><circle cx="278.5" cy="150.6" r="1.6"/><circle cx="282.2" cy="150.6" r="1.6"/><circle cx="287.9" cy="151.2" r="1.6"/><circle cx="292.9" cy="151.2" r="1.6"/><circle cx="296.0" cy="153.1" r="1.6"/><circle cx="299.1" cy="154.8" r="1.6"/><circle cx="302.2" cy="154.4" r="1.6"/><circle cx="296.6" cy="157.5" r="1.6"/><circle cx="293.5" cy="156.2" r="1.6"/><circle cx="304.1" cy="158.8" r="1.6"/><circle cx="306.0" cy="161.9" r="1.6"/><circle cx="308.2" cy="164.4" r="1.6"/><circle cx="308.5" cy="168.1" r="1.6"/><circle cx="313.9" cy="167.5" r="1.6"/><circle cx="317.0" cy="164.4" r="1.6"/><circle cx="286.0" cy="157.5" r="1.6"/><circle cx="286.4" cy="159.8" r="1.6"/><circle cx="285.4" cy="163.8" r="1.6"/><circle cx="283.5" cy="168.1" r="1.6"/><circle cx="280.8" cy="170.0" r="1.6"/><circle cx="281.6" cy="172.2" r="1.6"/><circle cx="276.4" cy="180.4" r="1.6"/><circle cx="275.4" cy="184.4" r="1.6"/><circle cx="272.2" cy="186.6" r="1.6"/><circle cx="269.8" cy="192.2" r="1.6"/><circle cx="271.0" cy="204.0" r="1.6"/><circle cx="272.2" cy="213.1" r="1.6"/><circle cx="270.4" cy="221.5" r="1.6"/><circle cx="333.2" cy="171.5" r="1.6"/><circle cx="337.9" cy="171.2" r="1.6"/><circle cx="341.0" cy="171.9" r="1.6"/><circle cx="344.8" cy="172.8" r="1.6"/><circle cx="354.1" cy="171.2" r="1.6"/><circle cx="362.2" cy="172.8" r="1.6"/><circle cx="338.5" cy="174.4" r="1.6"/><circle cx="337.2" cy="176.2" r="1.6"/><circle cx="334.1" cy="179.0" r="1.6"/><circle cx="330.1" cy="179.4" r="1.6"/><circle cx="327.9" cy="182.5" r="1.6"/><circle cx="327.2" cy="185.0" r="1.6"/><circle cx="324.5" cy="188.1" r="1.6"/><circle cx="343.5" cy="180.6" r="1.6"/><circle cx="346.0" cy="182.2" r="1.6"/><circle cx="344.8" cy="186.2" r="1.6"/><circle cx="347.2" cy="187.5" r="1.6"/><circle cx="345.4" cy="196.6" r="1.6"/><circle cx="349.5" cy="200.4" r="1.6"/><circle cx="349.5" cy="210.2" r="1.6"/><circle cx="351.4" cy="217.5" r="1.6"/><circle cx="355.8" cy="219.4" r="1.6"/><circle cx="326.6" cy="199.4" r="1.6"/><circle cx="325.4" cy="203.1" r="1.6"/><circle cx="323.2" cy="206.5" r="1.6"/><circle cx="323.5" cy="210.6" r="1.6"/><circle cx="326.4" cy="213.5" r="1.6"/><circle cx="325.4" cy="218.1" r="1.6"/><circle cx="319.8" cy="219.6" r="1.6"/><circle cx="316.6" cy="218.1" r="1.6"/><circle cx="312.0" cy="218.5" r="1.6"/><circle cx="376.0" cy="182.1" r="1.6"/><circle cx="378.5" cy="182.1" r="1.6"/><circle cx="387.2" cy="192.2" r="1.6"/><circle cx="389.1" cy="196.2" r="1.6"/><circle cx="393.2" cy="195.6" r="1.6"/><circle cx="382.2" cy="208.1" r="1.6"/><circle cx="379.1" cy="210.6" r="1.6"/><circle cx="376.6" cy="214.4" r="1.6"/><circle cx="382.9" cy="215.6" r="1.6"/><circle cx="387.0" cy="211.9" r="1.6"/><circle cx="392.6" cy="210.0" r="1.6"/><circle cx="391.6" cy="213.5" r="1.6"/><circle cx="392.6" cy="218.8" r="1.6"/><circle cx="376.0" cy="220.0" r="1.6"/><circle cx="374.8" cy="222.5" r="1.6"/><circle cx="396.6" cy="217.5" r="1.6"/><circle cx="1.9" cy="231.5" r="1.6"/><circle cx="18.5" cy="245.9" r="1.6"/><circle cx="9.4" cy="268.4" r="1.6"/><circle cx="20.0" cy="270.5" r="1.6"/><circle cx="26.0" cy="265.0" r="1.6"/><circle cx="30.0" cy="265.6" r="1.6"/><circle cx="34.4" cy="261.1" r="1.6"/><circle cx="37.5" cy="260.9" r="1.6"/><circle cx="40.0" cy="255.0" r="1.6"/><circle cx="43.1" cy="256.8" r="1.6"/><circle cx="45.6" cy="256.2" r="1.6"/><circle cx="45.2" cy="250.2" r="1.6"/><circle cx="50.6" cy="250.2" r="1.6"/><circle cx="53.8" cy="252.1" r="1.6"/><circle cx="55.6" cy="255.5" r="1.6"/><circle cx="57.5" cy="249.0" r="1.6"/><circle cx="61.2" cy="250.2" r="1.6"/><circle cx="64.1" cy="245.5" r="1.6"/><circle cx="72.2" cy="244.6" r="1.6"/><circle cx="72.2" cy="242.1" r="1.6"/><circle cx="75.0" cy="240.2" r="1.6"/><circle cx="74.8" cy="237.1" r="1.6"/><circle cx="77.2" cy="237.1" r="1.6"/><circle cx="78.5" cy="233.4" r="1.6"/><circle cx="88.5" cy="233.8" r="1.6"/><circle cx="98.1" cy="244.0" r="1.6"/><circle cx="101.2" cy="241.5" r="1.6"/><circle cx="104.4" cy="244.2" r="1.6"/><circle cx="102.5" cy="248.4" r="1.6"/><circle cx="104.4" cy="253.0" r="1.6"/><circle cx="102.5" cy="259.0" r="1.6"/><circle cx="104.4" cy="262.5" r="1.6"/><circle cx="103.4" cy="269.2" r="1.6"/><circle cx="58.8" cy="260.2" r="1.6"/><circle cx="56.9" cy="263.4" r="1.6"/><circle cx="59.1" cy="268.0" r="1.6"/><circle cx="57.5" cy="271.2" r="1.6"/><circle cx="59.4" cy="277.8" r="1.6"/><circle cx="61.6" cy="281.2" r="1.6"/><circle cx="65.4" cy="282.1" r="1.6"/><circle cx="68.8" cy="286.5" r="1.6"/><circle cx="74.8" cy="287.5" r="1.6"/><circle cx="76.5" cy="286.2" r="1.6"/><circle cx="82.5" cy="289.2" r="1.6"/><circle cx="85.0" cy="288.4" r="1.6"/><circle cx="88.4" cy="293.1" r="1.6"/><circle cx="96.0" cy="294.4" r="1.6"/><circle cx="99.4" cy="299.4" r="1.6"/><circle cx="109.4" cy="298.6" r="1.6"/><circle cx="113.1" cy="301.1" r="1.6"/><circle cx="117.2" cy="298.6" r="1.6"/><circle cx="120.6" cy="289.2" r="1.6"/><circle cx="124.4" cy="285.2" r="1.6"/><circle cx="120.4" cy="279.4" r="1.6"/><circle cx="120.4" cy="275.9" r="1.6"/><circle cx="122.5" cy="272.8" r="1.6"/><circle cx="117.5" cy="270.5" r="1.6"/><circle cx="116.0" cy="268.4" r="1.6"/><circle cx="143.6" cy="225.5" r="1.6"/><circle cx="140.8" cy="231.5" r="1.6"/><circle cx="142.0" cy="235.5" r="1.6"/><circle cx="140.8" cy="243.0" r="1.6"/><circle cx="150.1" cy="236.1" r="1.6"/><circle cx="150.5" cy="242.5" r="1.6"/><circle cx="154.9" cy="244.4" r="1.6"/><circle cx="160.2" cy="250.2" r="1.6"/><circle cx="248.0" cy="228.1" r="1.6"/><circle cx="251.1" cy="231.2" r="1.6"/><circle cx="249.5" cy="238.0" r="1.6"/><circle cx="240.2" cy="249.0" r="1.6"/><circle cx="235.8" cy="255.5" r="1.6"/><circle cx="238.6" cy="255.5" r="1.6"/><circle cx="233.6" cy="265.5" r="1.6"/><circle cx="232.4" cy="273.8" r="1.6"/><circle cx="233.4" cy="284.6" r="1.6"/><circle cx="239.2" cy="286.1" r="1.6"/><circle cx="232.4" cy="288.6" r="1.6"/><circle cx="236.1" cy="288.4" r="1.6"/><circle cx="234.9" cy="291.5" r="1.6"/><circle cx="237.8" cy="291.1" r="1.6"/><circle cx="230.5" cy="301.5" r="1.6"/><circle cx="249.9" cy="291.5" r="1.6"/><circle cx="253.6" cy="290.2" r="1.6"/><circle cx="253.0" cy="292.5" r="1.6"/><circle cx="248.2" cy="296.5" r="1.6"/><circle cx="257.6" cy="294.2" r="1.6"/><circle cx="263.0" cy="294.6" r="1.6"/><circle cx="257.6" cy="297.5" r="1.6"/><circle cx="261.1" cy="297.1" r="1.6"/><circle cx="264.2" cy="297.1" r="1.6"/><circle cx="269.1" cy="226.5" r="1.6"/><circle cx="295.8" cy="228.8" r="1.6"/><circle cx="304.4" cy="226.2" r="1.6"/><circle cx="276.0" cy="234.2" r="1.6"/><circle cx="279.8" cy="232.5" r="1.6"/><circle cx="282.9" cy="233.8" r="1.6"/><circle cx="279.1" cy="238.4" r="1.6"/><circle cx="282.2" cy="237.1" r="1.6"/><circle cx="291.0" cy="240.9" r="1.6"/><circle cx="288.9" cy="243.4" r="1.6"/><circle cx="276.6" cy="246.2" r="1.6"/><circle cx="278.5" cy="249.6" r="1.6"/><circle cx="282.2" cy="250.9" r="1.6"/><circle cx="291.0" cy="250.2" r="1.6"/><circle cx="280.4" cy="254.0" r="1.6"/><circle cx="282.9" cy="255.2" r="1.6"/><circle cx="284.5" cy="259.6" r="1.6"/><circle cx="286.0" cy="265.0" r="1.6"/><circle cx="289.1" cy="260.2" r="1.6"/><circle cx="291.6" cy="261.2" r="1.6"/><circle cx="295.4" cy="261.2" r="1.6"/><circle cx="295.4" cy="265.0" r="1.6"/><circle cx="297.9" cy="267.5" r="1.6"/><circle cx="301.6" cy="268.4" r="1.6"/><circle cx="305.4" cy="264.6" r="1.6"/><circle cx="311.2" cy="265.0" r="1.6"/><circle cx="316.4" cy="257.8" r="1.6"/><circle cx="314.1" cy="251.8" r="1.6"/><circle cx="318.5" cy="248.4" r="1.6"/><circle cx="321.6" cy="250.2" r="1.6"/><circle cx="324.8" cy="250.2" r="1.6"/><circle cx="327.2" cy="253.1" r="1.6"/><circle cx="333.5" cy="248.8" r="1.6"/><circle cx="338.2" cy="248.4" r="1.6"/><circle cx="343.5" cy="242.1" r="1.6"/><circle cx="348.5" cy="242.8" r="1.6"/><circle cx="352.2" cy="247.1" r="1.6"/><circle cx="351.0" cy="250.9" r="1.6"/><circle cx="356.0" cy="249.6" r="1.6"/><circle cx="357.9" cy="245.9" r="1.6"/><circle cx="361.2" cy="245.9" r="1.6"/><circle cx="361.6" cy="242.8" r="1.6"/><circle cx="366.0" cy="240.0" r="1.6"/><circle cx="369.1" cy="242.1" r="1.6"/><circle cx="374.8" cy="242.8" r="1.6"/><circle cx="378.5" cy="244.0" r="1.6"/><circle cx="376.6" cy="245.9" r="1.6"/><circle cx="381.0" cy="249.0" r="1.6"/><circle cx="383.5" cy="251.5" r="1.6"/><circle cx="384.1" cy="256.5" r="1.6"/><circle cx="387.2" cy="261.5" r="1.6"/><circle cx="385.4" cy="265.2" r="1.6"/><circle cx="381.6" cy="266.5" r="1.6"/><circle cx="384.1" cy="271.5" r="1.6"/><circle cx="387.2" cy="276.2" r="1.6"/><circle cx="390.8" cy="275.2" r="1.6"/><circle cx="386.6" cy="245.2" r="1.6"/><circle cx="390.8" cy="245.5" r="1.6"/><circle cx="371.0" cy="231.8" r="1.6"/><circle cx="376.0" cy="229.0" r="1.6"/><circle cx="380.4" cy="230.9" r="1.6"/><circle cx="383.5" cy="231.5" r="1.6"/><circle cx="377.9" cy="225.9" r="1.6"/><circle cx="363.5" cy="225.2" r="1.6"/><circle cx="354.1" cy="225.9" r="1.6"/><circle cx="351.6" cy="227.1" r="1.6"/><circle cx="353.5" cy="231.5" r="1.6"/><circle cx="353.2" cy="235.5" r="1.6"/><circle cx="391.0" cy="232.8" r="1.6"/><circle cx="394.8" cy="236.5" r="1.6"/><circle cx="393.5" cy="227.1" r="1.6"/><circle cx="396.0" cy="227.8" r="1.6"/><circle cx="396.0" cy="249.0" r="1.6"/><circle cx="396.0" cy="257.1" r="1.6"/><circle cx="397.0" cy="265.9" r="1.6"/><circle cx="281.0" cy="272.1" r="1.6"/><circle cx="283.5" cy="274.6" r="1.6"/><circle cx="287.2" cy="276.5" r="1.6"/><circle cx="284.1" cy="279.0" r="1.6"/><circle cx="286.6" cy="280.9" r="1.6"/><circle cx="284.1" cy="285.2" r="1.6"/><circle cx="285.4" cy="288.4" r="1.6"/><circle cx="283.5" cy="292.1" r="1.6"/><circle cx="287.2" cy="292.1" r="1.6"/><circle cx="286.0" cy="296.5" r="1.6"/><circle cx="288.5" cy="296.5" r="1.6"/><circle cx="286.6" cy="300.2" r="1.6"/><circle cx="269.1" cy="294.0" r="1.6"/><circle cx="271.6" cy="296.5" r="1.6"/><circle cx="267.2" cy="298.8" r="1.6"/><circle cx="381.6" cy="291.2" r="1.6"/><circle cx="373.5" cy="295.2" r="1.6"/><circle cx="372.9" cy="300.2" r="1.6"/></g></svg>
<div class="a" style="left:676px;top:56px;width:145px;height:51px;background:#0d1a1f;border-radius:3px"></div>
<div class="a" style="left:688px;top:67px;width:12px;height:12px;background:#5aec85;border-radius:3px"></div>
<div class="a" style="left:688px;top:85px;width:12px;height:12px;background:#b8487a;border-radius:3px"></div>
<div class="t" style="left:705.80px;top:68.00px;font:bold 10px/1 'Liberation Sans',sans-serif;color:#fff;letter-spacing:0.25px;">Visible features</div>
<div class="t" style="left:705.80px;top:86.00px;font:bold 10px/1 'Liberation Sans',sans-serif;color:#fff;letter-spacing:0.34px;">Filtered out features</div>
<div class="a" style="left:1020px;top:56px;width:30px;height:30px;background:#fff;border-radius:4px"></div>
<svg class="a" style="left:1026px;top:62px" width="18" height="18" viewBox="0 0 18 18"><circle cx="7.3" cy="7.3" r="4.3" stroke="#1a2b44" stroke-width="2" fill="none"/><path d="M10.5 10.5 L14.5 14.5" stroke="#1a2b44" stroke-width="2.4" stroke-linecap="round"/></svg>
<div class="a" style="left:1020px;top:99px;width:30px;height:89px;background:#fff;border-radius:4px"></div>
<div class="a" style="left:1020px;top:128px;width:30px;height:1px;background:#dde3e8;"></div>
<div class="a" style="left:1020px;top:158px;width:30px;height:1px;background:#dde3e8;"></div>
<svg class="a" style="left:1026px;top:104px" width="18" height="18" viewBox="0 0 18 18"><path d="M9 4v10M4 9h10" stroke="#1a2b44" stroke-width="2"/></svg>
<svg class="a" style="left:1026px;top:135px" width="18" height="18" viewBox="0 0 18 18"><path d="M4 9h10" stroke="#1a2b44" stroke-width="2"/></svg>
<svg class="a" style="left:1026px;top:166px" width="18" height="18" viewBox="0 0 18 18"><path d="M9 2.6 L13.3 13 L9 9.9 L4.7 13z" fill="#1a2b44" stroke="#1a2b44" stroke-linejoin="round"/></svg>
<div class="a" style="left:1008px;top:578px;width:42px;height:42px;background:#4264fb;border-radius:50%;box-shadow:0 0 4px rgba(0,0,0,.4)"></div>
<svg class="a" style="left:1021px;top:589px" width="16" height="18" viewBox="0 0 16 18"><path d="M8 2a0.9 0.9 0 0 1 .9 .9v.5c2.3 .5 3.6 2.5 3.6 4.8v3.3l1.3 1.5H2.2l1.3-1.5V8.2c0-2.3 1.3-4.3 3.6-4.8v-.5A.9 .9 0 0 1 8 2z" fill="#fff"/><path d="M6.2 14.5h3.6a1.8 1.8 0 0 1-3.6 0z" fill="#fff"/></svg>
<div class="a" style="left:1035px;top:572px;width:18px;height:18px;background:#e94a9e;border-radius:50%"></div>
<div class="t" style="left:1041.20px;top:577.00px;font:bold 10.5px/1 'Liberation Sans',sans-serif;color:#fff;letter-spacing:0px;">4</div>
<div class="a" style="left:-0.3px;top:287px;width:32.3px;height:32.3px;background:#6bdcec;border-radius:50%"></div>
<div class="t" style="left:11.20px;top:295.00px;font:bold 16px/1 'Liberation Sans',sans-serif;color:#fff;letter-spacing:0px;">9</div>
<div class="a" style="left:32px;top:301px;width:397px;height:4px;background:#fff;"></div>
<div class="a" style="left:32px;top:302px;width:397px;height:2px;background:#061040;"></div>
<div class="a" style="left:430px;top:300px;width:6px;height:6px;background:#0c1a4c;border-radius:50%;box-shadow:0 0 0 1px #fff"></div>
</body></html>
